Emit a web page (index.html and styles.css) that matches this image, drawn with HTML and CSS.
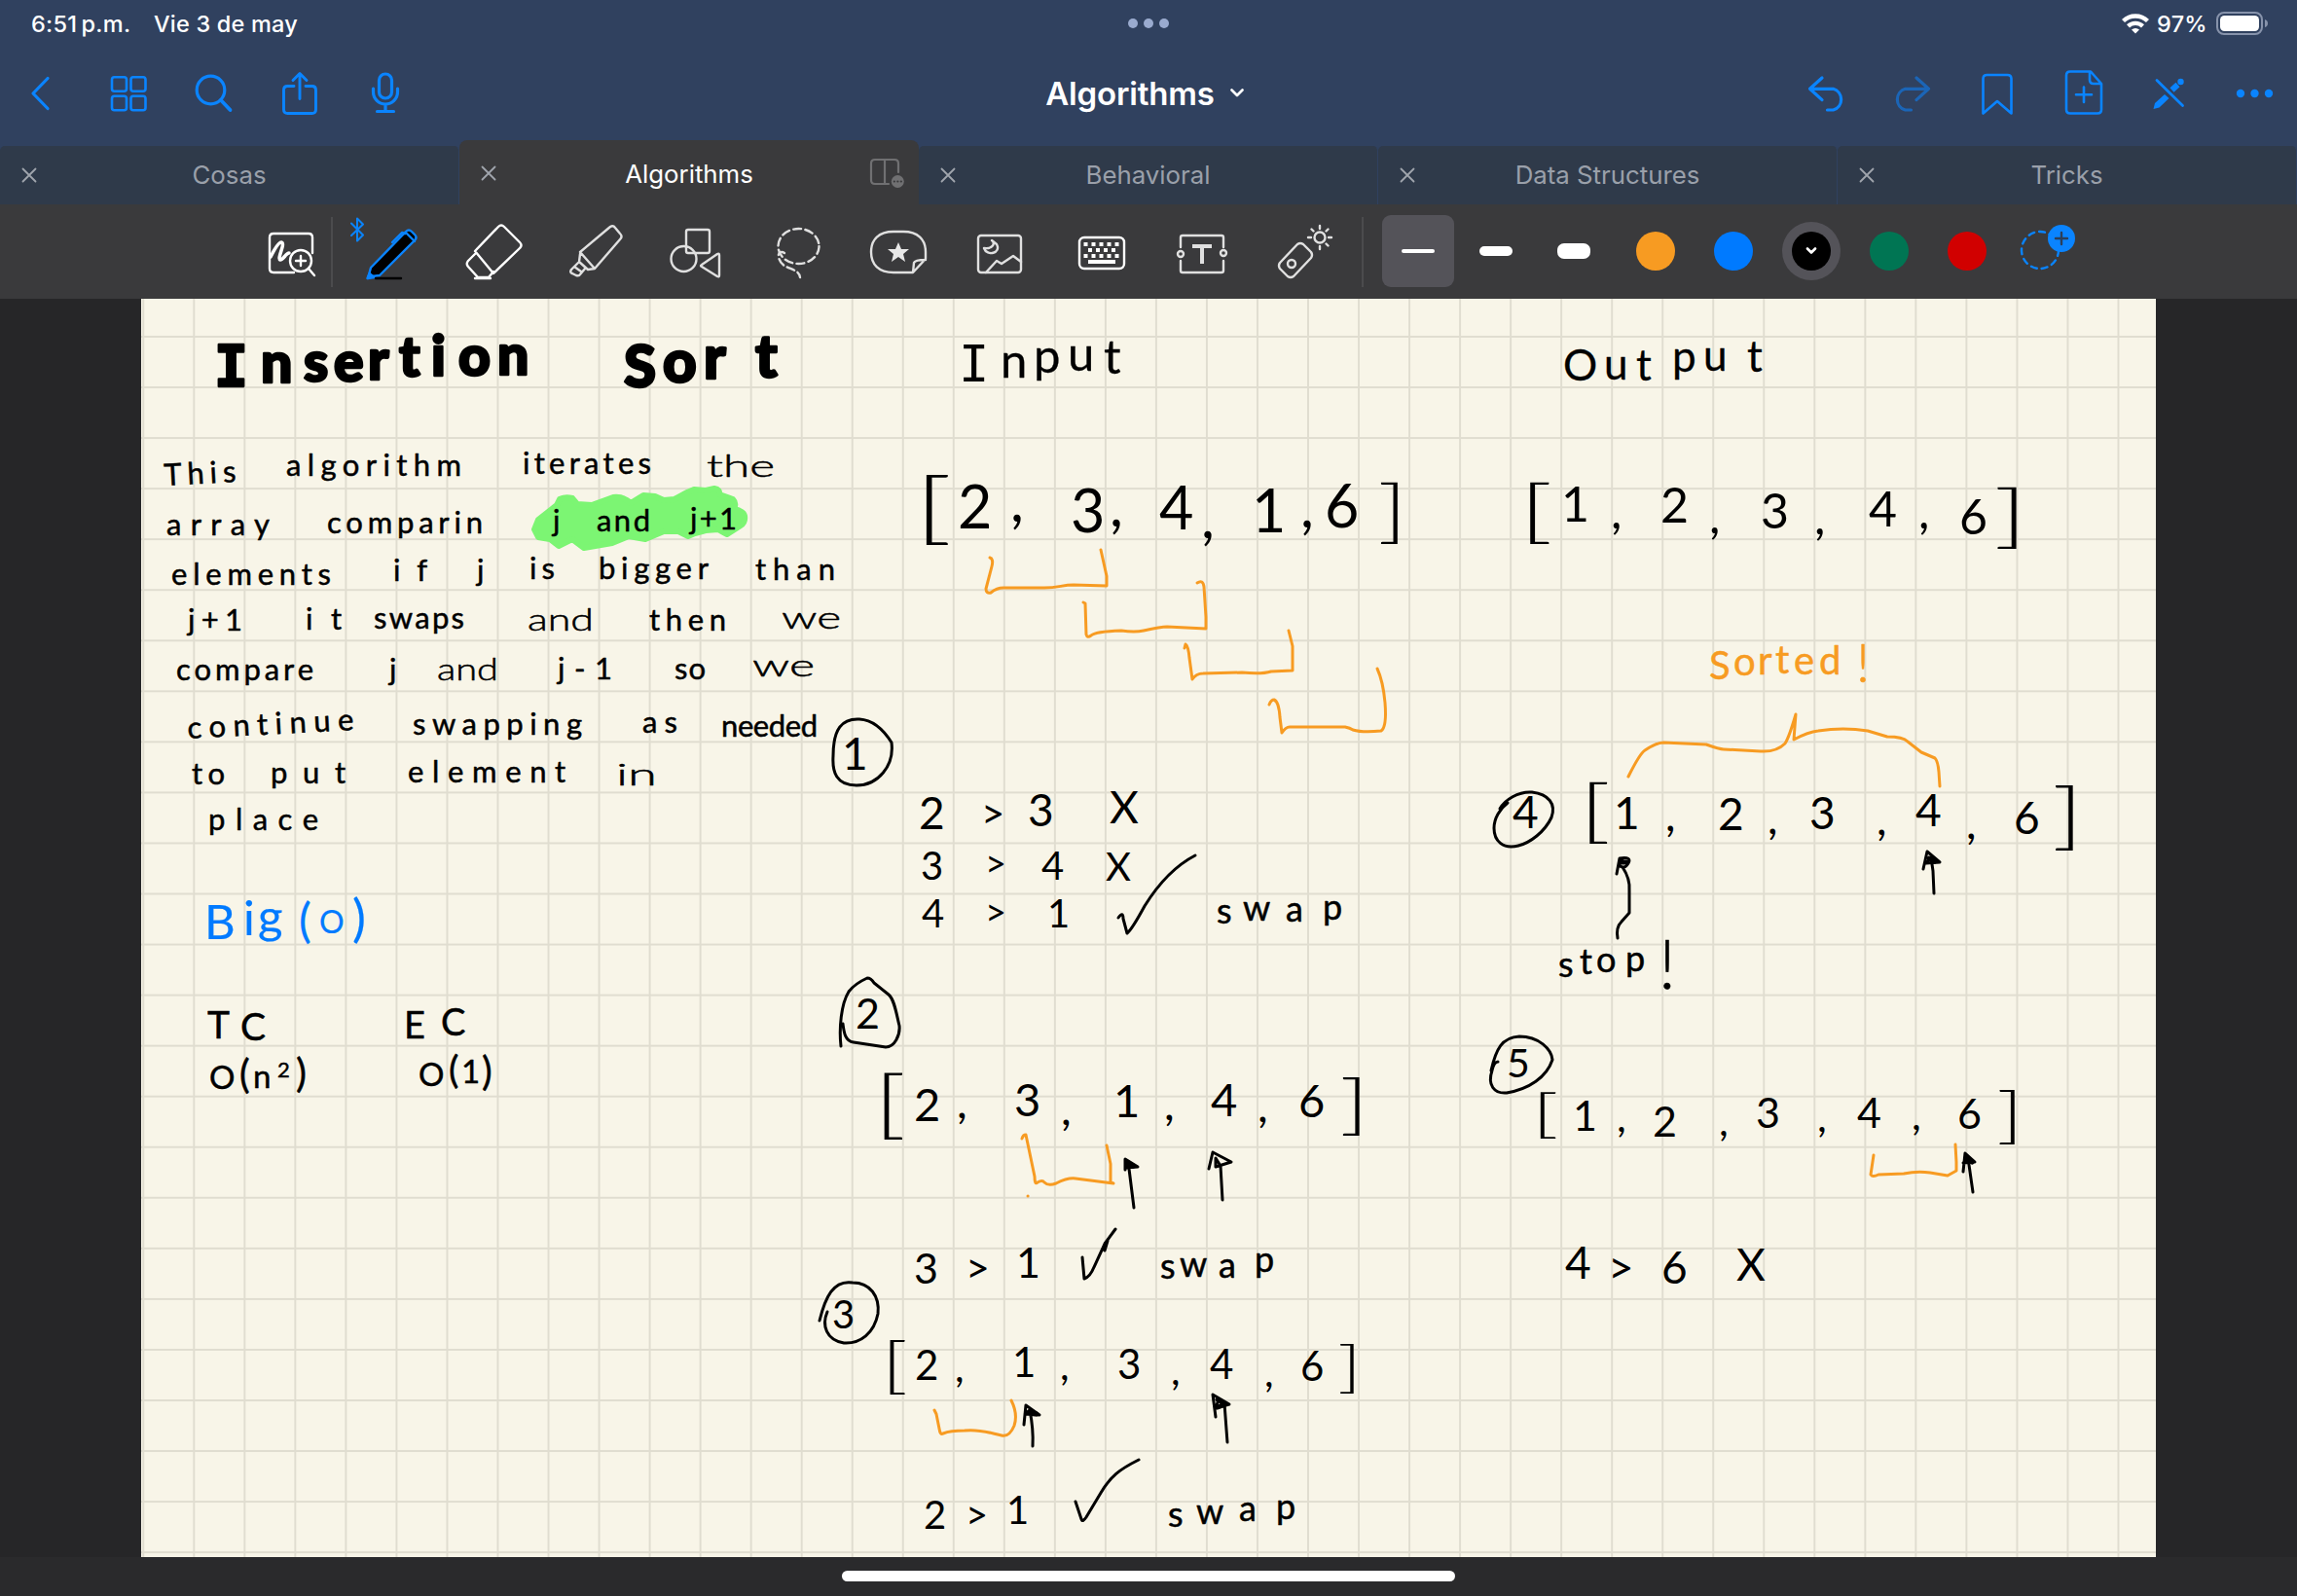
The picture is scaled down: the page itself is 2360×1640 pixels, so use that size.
FILE: index.html
```html
<!DOCTYPE html>
<html lang="es">
<head>
<meta charset="utf-8">
<title>Algorithms</title>
<link rel="stylesheet" href="styles.css">
</head>
<body>
<header class="top">
  <div class="status">
    <span class="time">6:51<span class="thin"> </span>p.m.</span>
    <span class="date">Vie 3 de may</span>
    <span class="multitask"><i></i><i></i><i></i></span>
    <span class="power">
      <svg width="28" height="32" viewBox="2180 8 28 32" fill="none" stroke="#fff" stroke-width="4.4"><path d="M2181.500 21.500a18 18 0 0 1 25 0M2186.500 26.800a11 11 0 0 1 15 0"/><path d="M2190 30.500a6 6 0 0 1 8 0l-4 4z" fill="#fff" stroke="none"/></svg>
      <span class="percent">97%</span>
      <svg width="56" height="32" viewBox="2276 8 56 32"><rect x="2278" y="13" width="46" height="22" rx="7" fill="none" stroke="#8793ab" stroke-width="2"/><rect x="2281" y="16" width="40" height="16" rx="4.500" fill="#fff"/><path d="M2327 20q3 1 3 4t-3 4z" fill="#8793ab"/></svg>
    </span>
  </div>
  <nav class="nav">
    <div class="group">
      <svg class="nav-icon" viewBox="0 52 88 88"><path d="M49 80.500 34 96l15 15.500"/></svg>
      <svg class="nav-icon" viewBox="88 52 88 88"><g stroke-width="2.600"><rect x="115" y="79.300" width="15" height="14.500" rx="2.500"/><rect x="134.500" y="79.300" width="15" height="14.500" rx="2.500"/><rect x="115" y="98.800" width="15" height="14.500" rx="2.500"/><rect x="134.500" y="98.800" width="15" height="14.500" rx="2.500"/></g></svg>
      <svg class="nav-icon" viewBox="176 52 88 88"><circle cx="216.500" cy="92.500" r="14.300"/><path d="M227 103l9.500 10" stroke-width="3.800"/></svg>
      <svg class="nav-icon" viewBox="264 52 88 88"><path d="M302 88.500h-6.500q-4 0-4 4v20q0 4 4 4h25q4 0 4-4v-20q0-4-4-4H314M308 101.500V76M301 82.500l7-7 7 7" stroke-width="2.900"/></svg>
      <svg class="nav-icon" viewBox="352 52 88 88"><rect x="389.500" y="76" width="13" height="25" rx="6.500"/><path d="M383.500 91v3.500a12.500 12.500 0 0 0 25 0V91M396 107v7M387.500 114.500h17"/></svg>
    </div>
    <h1 class="doc-title">Algorithms <svg width="20" height="14" viewBox="1261 90 20 14"><path d="M1265.500 93.500l5.500 5.500 5.500-5.500"/></svg></h1>
    <div class="group">
      <svg class="nav-icon" viewBox="1832 52 88 88"><path d="M1872 80l-12.500 11.300 12.500 11.300M1860.500 91.300h23a11.300 11.300 0 0 1 0 21.700h-6"/></svg>
      <svg class="nav-icon dim" viewBox="1920 52 88 88"><path d="M1969 80l12.500 11.300-12.500 11.300M1980.500 91.300h-23a11.300 11.300 0 0 0 0 21.700h6"/></svg>
      <svg class="nav-icon" viewBox="2008 52 88 88"><path d="M2037.500 116.500V81q0-4 4-4h21q4 0 4 4v35.500L2052 104z" stroke-width="2.600"/></svg>
      <svg class="nav-icon" viewBox="2096 52 88 88"><path d="M2148 73.500h-21q-4 0-4 4v35q0 4 4 4h28q4 0 4-4V86zM2147 74v8q0 4 4 4h8M2141 89.500v15.500M2133 97.300h16" stroke-width="2.600"/></svg>
      <svg class="nav-icon" viewBox="2184 52 88 88"><path d="M2216 82.500l26.500 26" stroke-width="2.800"/><path d="M2224 97l4.500 4-10 9.500-6 1.500 1.500-6z" fill="#0a84ff" stroke="none"/><path d="M2231.500 92.500l6-5.500" stroke-width="6" stroke-linecap="butt"/><circle cx="2240.500" cy="84" r="3.200" fill="#0a84ff" stroke="none"/></svg>
      <svg class="nav-icon" viewBox="2272 52 88 88"><g fill="#0a84ff" stroke="none"><circle cx="2302" cy="96" r="4.200"/><circle cx="2316.500" cy="96" r="4.200"/><circle cx="2331" cy="96" r="4.200"/></g></svg>
    </div>
  </nav>
</header>
<div class="tabs">
  <div class="tab"><svg class="close" viewBox="0 0 16 16"><path d="M1.500 1.500l13 13M14.500 1.500l-13 13"/></svg><span>Cosas</span></div>
  <div class="tab active"><svg class="close" viewBox="0 0 16 16"><path d="M1.500 1.500l13 13M14.500 1.500l-13 13"/></svg><span>Algorithms</span>
    <svg class="split" viewBox="892 160 40 36"><path d="M923 177v-9q0-4-4-4h-20q-4 0-4 4v17q0 4 4 4h14M909 164v25"/><circle cx="922.300" cy="186.500" r="6.500" fill="#707072" stroke="none"/><path d="M918.800 186.500h.1M922.300 186.500h.1M925.800 186.500h.1" stroke="#3a3a3c"/></svg></div>
  <div class="tab"><svg class="close" viewBox="0 0 16 16"><path d="M1.500 1.500l13 13M14.500 1.500l-13 13"/></svg><span>Behavioral</span></div>
  <div class="tab"><svg class="close" viewBox="0 0 16 16"><path d="M1.500 1.500l13 13M14.500 1.500l-13 13"/></svg><span>Data Structures</span></div>
  <div class="tab"><svg class="close" viewBox="0 0 16 16"><path d="M1.500 1.500l13 13M14.500 1.500l-13 13"/></svg><span>Tricks</span></div>
</div>
<div class="toolbar">
  <svg class="tool zoom" viewBox="260 210 80 97"><path d="M302 280h-21q-4 0-4-4v-32q0-4 4-4h36q4 0 4 4v16"/><path d="M278 264c4-8 8-15 11-15 5 1-5 17-1 18 3 0 6-7 9-7" stroke-width="3.500"/><circle cx="309" cy="268" r="11"/><path d="M317 276l6 7M309 263v10M304 268h10"/></svg>
  <span class="rule"></span>
  <svg class="tool" viewBox="351 210 104 97"><path d="M361 229.500l12 12-6 6v-23l6 6-12 11.500" stroke="#0a84ff" stroke-width="2"/><path d="M378 286l3-11 36-37q3-3 6 0l3 3q3 3 0 6l-36 36-8 1z" fill="#000" stroke="#0a84ff" stroke-width="2.400"/><path d="M403 249l10-10 3 1M417 239l9 9" stroke="#0a84ff"/><path d="M377.500 286l2-5 5 4z" fill="#0a84ff" stroke="#0a84ff"/><path d="M386 286h26" stroke="#000"/></svg>
  <svg class="tool" viewBox="455 210 104 97"><path d="M488 258l24-25q3-3 6 0l16 16q3 3 0 6l-27 26zM488 261l-7 7q-2.500 3 0 6l10 11h11l5-6M488 286h16"/></svg>
  <svg class="tool soft" viewBox="559 210 104 97"><path d="M596 259l31-26q3-2 5 1l5 6q3 3 0 6l-26 30zM596 261l-1 8 9 8 7-1M594 270l-7 7q-2 3 1 4l4 2q3 1 4-1l5-6M590 274l7 5"/></svg>
  <svg class="tool soft" viewBox="663 210 104 97"><rect x="705" y="236" width="24" height="24" rx="2"/><circle cx="702.500" cy="266" r="13"/><path d="M739 262v21q0 2-2 1l-16-10q-2-1 0-2l16-11q2-1 2 1z"/></svg>
  <svg class="tool soft" viewBox="767 210 104 97"><path d="M806 260c-3-2-7-1-6 4 2 14 21 10 22 21" stroke-dasharray="8 4"/><ellipse cx="820.500" cy="253" rx="21" ry="18" stroke-dasharray="8 4.300"/></svg>
  <svg class="tool soft" viewBox="871 210 104 97"><path d="M938 280h-20c-15 0-23-8-23-21s8-21 23-21h10c15 0 23 8 23 21v7zM938 280l1-10q1-3 12-3"/><path d="M923 249l3 7h8l-6 5 2 8-7-5-7 5 2-8-6-5h8z" fill="#e8e8e8" stroke="none"/></svg>
  <svg class="tool soft" viewBox="975 210 104 97"><rect x="1005" y="242" width="44" height="38" rx="3"/><path d="M1013 280l11-12 5 3 12-8 8 6M1019 247c4 3 1 9-8 8 3 9 18 5 13-4z"/></svg>
  <svg class="tool" viewBox="1079 210 104 97"><rect x="1109" y="244" width="46" height="32" rx="5"/><path d="M1113.500 251h36M1118 257h30M1113.500 263h36" stroke-width="4" stroke-linecap="butt" stroke-dasharray="4 4"/><path d="M1118 269h28" stroke-width="4" stroke-linecap="butt"/></svg>
  <svg class="tool soft" viewBox="1183 210 104 97"><path d="M1213 254v-10q0-2 2-2h40q2 0 2 2v10M1213 268v10q0 2 2 2h40q2 0 2-2v-10"/><circle cx="1213" cy="261" r="3"/><circle cx="1257" cy="260" r="3"/><path d="M1225 253h20M1235 253v18" stroke-width="4" stroke-linecap="butt"/></svg>
  <svg class="tool soft" viewBox="1287 210 104 97"><path d="M1333 251l-18 19q-2 3 0 6l8 8q3 2 6 0l18-19q2-3 0-6l-8-8q-3-2-6 0z"/><circle cx="1327" cy="271" r="4"/><circle cx="1356" cy="244" r="5.500"/><path d="M1356 232v3M1356 253v3M1344 244h3M1365 244h3M1347.500 235.500l2 2M1362.500 250.500l2 2M1364.500 235.500l-2 2"/></svg>
  <span class="rule second"></span>
  <div class="options">
    <span class="pick selected"><i class="w1"></i></span>
    <span class="pick"><i class="w2"></i></span>
    <span class="pick"><i class="w3"></i></span>
    <span class="swatch"><i class="orange"></i></span>
    <span class="swatch"><i class="blue"></i></span>
    <span class="swatch"><i class="black"><svg width="12" height="10" viewBox="0 0 12 10"><path d="M2 2.500l4 4 4-4"/></svg></i></span>
    <span class="swatch"><i class="green"></i></span>
    <span class="swatch"><i class="red"></i></span>
  </div>
  <svg class="tool add" viewBox="2061 210 84 97"><circle cx="2097" cy="257" r="19" stroke="#0a84ff" stroke-dasharray="6 5"/><circle cx="2119" cy="245" r="14" fill="#0a84ff" stroke="none"/><path d="M2119 239v12M2113 245h12" stroke="#2b3f5a"/></svg>
</div>
<main class="desk">
  <div class="page">
  <svg class="ink" width="2070" height="1293" viewBox="145 307 2070 1293">
    <path class="marker" d="M549 544l4-10 19-15 3-6q6-3 13-1l5 6 15 1 22-8q8-1 14 3l4 3 13-8 12 1 9 4 11-1 13-7 7-3 12 1 9-2q6 1 5 6l14 5q4 4 1 10 10 2 11 7 1 7-4 10l-14 9q-6-3-9-5l-13 1-11 3-7 3-10-5h-15l-19 8-17-3-17 7-29 5-12-9-14 7-9-7-12-2z"/>
    <g class="heading">
      <text x="220 268 312 343 378 410 443 471 511" y="397 393 392 392 390 387 386 386 385" font-size="57"><tspan class="serif" font-size="58">I</tspan>nsertion</text>
      <text x="641 681 723 776" y="398 393 389 388" font-size="60">Sort</text>
    </g>
    <g class="label">
      <text x="985 1028 1062 1097 1134" y="392 388 383 381 384" font-size="49"><tspan class="serif" font-size="52">I</tspan>nput</text>
      <text x="1606 1648 1681 1718 1750 1795" y="391 390 391 382 381 382" font-size="44">Output</text>
    </g>
    <g class="body">
      <text x="169" y="499" textLength="74" transform="rotate(-3 169 499)">This</text><text x="294" y="489" textLength="180">algorithm</text><text x="537" y="487" textLength="132">iterates</text><text class="wide" x="726" y="490" textLength="70" lengthAdjust="spacingAndGlyphs">the</text>
      <text x="171" y="550" textLength="106">array</text><text x="336" y="548" textLength="160">comparin</text><text x="568" y="546">j</text><text x="613" y="546" textLength="55">and</text><text x="709" y="544" textLength="48">j+1</text>
      <text x="176" y="601" textLength="164">elements</text><text x="404" y="597" textLength="35">if</text><text x="490" y="597">j</text><text x="544" y="595" textLength="26">is</text><text x="615" y="595" textLength="113">bigger</text><text x="776" y="596" textLength="82">than</text>
      <text x="193" y="648" textLength="56">j+1</text><text x="314" y="647" textLength="37">it</text><text x="384" y="646" textLength="93">swaps</text><text class="wide" x="542" y="648" textLength="68" lengthAdjust="spacingAndGlyphs">and</text><text x="667" y="648" textLength="79">then</text><text class="wide" x="803" y="646" textLength="61" lengthAdjust="spacingAndGlyphs">we</text>
      <text x="181" y="699" textLength="141">compare</text><text x="400" y="699">j</text><text class="wide" x="449" y="699" textLength="63" lengthAdjust="spacingAndGlyphs">and</text><text x="573" y="698" textLength="56">j-1</text><text x="693" y="698" textLength="32">so</text><text class="wide" x="773" y="695" textLength="64" lengthAdjust="spacingAndGlyphs">we</text>
      <text x="193" y="759" textLength="171" transform="rotate(-3 193 759)">continue</text><text x="424" y="755" textLength="174">swapping</text><text x="660" y="753" textLength="36">as</text><text x="741" y="757" textLength="99">needed</text>
      <text x="197" y="806" textLength="34">to</text><text x="278" y="805" textLength="77">put</text><text x="419" y="804" textLength="162">element</text><text class="wide" x="633" y="807" textLength="42" lengthAdjust="spacingAndGlyphs">in</text>
      <text x="214" y="853" textLength="113">place</text>
    </g>
    <text class="sky" x="210 250 265 307 328 362" y="965 961 959 963 959 962" font-size="49">Big<tspan font-size="48">(</tspan><tspan font-size="32">O</tspan><tspan font-size="52">)</tspan></text>
    <g font-size="39">
      <text x="213 247" y="1067 1069">TC</text>
      <text x="415 453" y="1067 1064" font-size="38">EC</text>
      <text x="215 246 260 285 304" y="1119 1118 1118 1107 1117" font-size="33">O<tspan font-size="40">(</tspan>n<tspan font-size="22">2</tspan><tspan font-size="41">)</tspan></text>
      <text x="430 461 474 495" y="1116 1113 1113 1115" font-size="33">O<tspan font-size="39">(</tspan>1<tspan font-size="40">)</tspan></text>
    </g>
    <g class="arrays">
      <text x="984 1038 1100 1140 1191 1234 1286 1336 1361" y="543 536 547 541 544 553 547 542 542" font-size="61">2,3,4,1,6</text>
      <text x="1604 1655 1706 1756 1809 1864 1920 1971 2013" y="536 543 537 548 543 549 541 543 549" font-size="50">1,2,3,4,6</text>
      <text x="939 983 1042 1090 1144 1196 1244 1292 1334" y="1152 1149 1147 1156 1148 1151 1147 1153 1148" font-size="47">2,3,1,4,6</text>
      <text x="940 981 1040 1089 1148 1203 1243 1299 1336" y="1418 1420 1415 1418 1417 1423 1417 1425 1419" font-size="42">2,1,3,4,6</text>
      <text x="1658 1711 1765 1816 1859 1928 1968 2020 2069" y="852 854 853 857 852 858 849 862 857" font-size="46">1,2,3,4,6</text>
      <text x="1616 1661 1698 1766 1804 1867 1908 1964 2011" y="1162 1163 1168 1167 1159 1163 1159 1161 1160" font-size="43">1,2,3,4,6</text>
    </g>
    <g class="brackets">
      <text transform="translate(938 549) scale(1.700 1)" font-size="81">[</text><text transform="translate(1415 550) scale(1.500 1)" font-size="71">]</text>
      <text transform="translate(1560 550) scale(1.700 1)" font-size="71">[</text><text transform="translate(2048 555) scale(1.700 1)" font-size="71">]</text>
      <text transform="translate(897 1161) scale(1.500 1)" font-size="77">[</text><text transform="translate(1376 1158) scale(1.600 1)" font-size="66">]</text>
      <text transform="translate(905 1425) scale(1.500 1)" font-size="63">[</text><text transform="translate(1374 1424) scale(1.500 1)" font-size="57">]</text>
      <text transform="translate(1622 858) scale(1.600 1)" font-size="70">[</text><text transform="translate(2108 864) scale(1.500 1)" font-size="74">]</text>
      <text transform="translate(1573 1163) scale(1.800 1)" font-size="54">[</text><text transform="translate(2051 1168) scale(1.500 1)" font-size="64">]</text>
    </g>
    <g class="steps" font-size="46">
      <text x="865" y="791">1</text>
      <text x="944 1008 1056 1140" y="852 851 849 846">2<tspan font-size="42">&gt;</tspan>3X</text>
      <text x="946 1012 1070 1136" y="904 901 904 905" font-size="40">3<tspan font-size="38">&gt;</tspan>4X</text>
      <text x="947 1012 1076" y="953 951 953" font-size="40">4<tspan font-size="38">&gt;</tspan>1</text>
      <text x="879" y="1057" font-size="43">2</text>
      <text x="939 992 1044" y="1319 1318 1313" font-size="43">3&gt;1</text>
      <text x="855" y="1365" font-size="40">3</text>
      <text x="949 992 1034" y="1571 1571 1566" font-size="40">2&gt;1</text>
      <text x="1554" y="851">4</text>
      <text x="1548" y="1107" font-size="41">5</text>
      <text x="1608 1652 1707 1784" y="1314 1319 1319 1316">4&gt;6X</text>
    </g>
    <g class="word">
      <text x="1250 1277 1321 1359" y="949 946 947 945">swap</text>
      <text x="1192 1212 1252 1289" y="1314 1312 1313 1307">swap</text>
      <text x="1200 1229 1273 1311" y="1569 1566 1563 1561">swap</text>
      <text x="1601 1623 1640 1670 1704" y="1004 1001 999 998 1016">stop<tspan class="thin-mark" font-size="70">!</tspan></text>
      <text class="amber" x="1756 1781 1806 1824 1843 1869 1907" y="698 694 693 692 693 693 701" font-size="40">Sorted<tspan class="thin-mark" font-size="55">!</tspan></text>
    </g>
    <g class="line amber-line">
      <path d="M1017 573q4 1 2 9l-6 23q0 5 5 4 6-5 13-5h42c15 0 18-3 30-3l34 1v-10l-6-27"/>
      <path d="M1113 619l2 1 1 32q1 4 5 1 4-4 31-5 14 2 23 0 18-4 24-4l40 2v-12l-2-31q-1-8-7-4"/>
      <path d="M1217 666l1-4q3 2 4 14l3 22q4-6 11-6l40-1q20 2 30-1l22-1v-25l-4-16"/>
      <path d="M1304 724q2-5 5-5 5 2 6 18l2 16q4-6 8-6h57q5 1 8 3 10 3 29 1 6-4 4-29-2-22-8-35"/>
      <path d="M1050 1170q1-4 4-4l9 43q0 9 3 6 5-3 7 0 4 4 12 1 12-6 20-5l39 5-3-1v-19l-4-19"/>
      <path d="M960 1449l2 4 3 15q1 7 4 5 7-3 22-3c16-2 28 3 38 5q8 2 13-10 4-12-3-26"/>
      <path d="M1673 798q12-24 17-27 12-8 19-8l44 2q14 5 18 5l38 2q16 1 25-8 4-6 11-30l-2 26q15-8 25-9 26-4 51 0l20 6q16 0 21 5l14 11 14 6q3 3 4 14l1 15"/>
      <path d="M1925 1187l-3 20q2 3 8 0l26-1q14-3 27-1l18 3 9-5v-9l-1-18"/>
      <path d="M1056 1229h.1"/>
    </g>
    <g class="line">
      <path d="M856 777c0-28 9-39 27-38 17 1 28 16 33 24 3 24-14 44-36 44-21 0-25-14-24-30z"/>
      <path d="M864 1075c-2-18 0-43 8-56q6-8 19-14 4 0 7 5l15 12c6 5 8 20 11 32 1 10-5 22-14 22l-33-5c-9-1-10-11-11-19"/>
      <path d="M842 1357c6-24 14-42 34-39 18 0 28 14 26 32-4 20-18 31-35 30-18-3-23-18-17-32"/>
      <path d="M1541 831c5-9 19-18 33-17 17 2 25 12 20 26-7 15-22 26-34 29-16 4-25-5-25-18 0-10 6-20 14-26"/>
      <path d="M1539 1091q-4 0-6 9c-5 15 2 24 15 23 23-4 41-16 47-34-1-11-14-24-34-24-18 1-24 13-29 35"/>
      <path d="M1149 943q5-7 5 1l4 15q5-4 18-28 23-37 52-52"/>
      <path d="M1112 1292l2 22q6-2 10-12l11-24 11-15M1138 1275l-3 10"/>
      <path d="M1105 1543l6 18q1 4 5-2l15-25c10-17 19-24 39-34"/>
      <path d="M1661 898l3-16q13-2 9 5-4 7-10 2l4-5M1667 891q8 12 7 24v23l-8 9q-6 6-4 17"/>
      <path d="M1976 893l4-18 13 11-14 1 5-6 2 14 1 23"/>
      <path d="M2017 1204l2-19 10 9-12 1 5-5 5 35"/>
      <path d="M1156 1202v-11l13 8-12 1 2-7 6 48"/>
      <path d="M1242 1201l4-17 19 10-16 5v-9l5 8 2 35"/>
      <path d="M1052 1464l2-20 14 10-15-1 5-4q4 20 3 37"/>
      <path d="M1249 1456l-3-23 17 10-14 4 3-9 6 4 3 40"/>
    </g>
    <g class="line fat"><path d="M1058 1452l7 1M1982 882l6 3M2020 1190l6 4M1251 1438l8 5-8 3M1158 1194l6 4M1665 886l6 0"/></g>
  </svg>
  </div>
</main>
<div class="home"></div>
</body>
</html>
```
FILE: styles.css
```css
* { box-sizing: border-box; }
body {
  margin: 0;
  width: 2360px;
  height: 1640px;
  overflow: hidden;
  background: #2a2a2c;
  font-family: Inter, "Liberation Sans", sans-serif;
  color: #fff;
  display: flex;
  flex-direction: column;
}
svg { display: block; flex: none; }
i { display: block; }

.top { height: 144px; background: #30415f; }
.status {
  height: 48px;
  display: grid;
  grid-template-columns: 126px 1004px 100px 1fr;
  align-items: center;
  padding-left: 32px;
  font-size: 23.5px;
  font-weight: 500;
}
.time { letter-spacing: .3px; }
.date { letter-spacing: .2px; }
.thin { font-size: 14px; }
.multitask { display: flex; gap: 6px; margin-left: -3px; }
.multitask i { width: 10px; height: 10px; border-radius: 50%; background: #9aabcf; }
.power { display: flex; justify-content: flex-end; align-items: center; gap: 8px; padding-right: 28px; }
.percent { letter-spacing: .3px; }

.nav {
  height: 96px;
  display: flex;
  align-items: center;
  justify-content: space-between;
}
.group { display: flex; }
.nav-icon {
  width: 88px;
  height: 88px;
  fill: none;
  stroke: #0a84ff;
  stroke-width: 3.2;
  stroke-linecap: round;
  stroke-linejoin: round;
}
.dim { opacity: .55; }
.doc-title {
  margin: 0 0 0 83px;
  display: flex;
  align-items: center;
  gap: 13px;
  font-size: 33px;
  font-weight: 600;
  letter-spacing: -.15px;
}
.doc-title svg, .black svg { fill: none; stroke: #fff; stroke-width: 2.6; stroke-linecap: round; stroke-linejoin: round; }

.tabs {
  height: 66px;
  display: flex;
  align-items: flex-end;
  background: #30415f;
}
.tab {
  width: 472px;
  height: 60px;
  display: grid;
  grid-template-columns: 52px 1fr 52px;
  align-items: center;
  padding-bottom: 1px;
  background: #2f3a4a;
  border-right: 1px solid #30415f;
  border-radius: 5px 5px 0 0;
  color: #9aa0aa;
  font-size: 25.8px;
  text-align: center;
}
.tab.active { height: 66px; padding: 2px 0 0; background: #3a3a3c; color: #fff; border-radius: 8px 8px 0 0; border-right: 0; }
.close { width: 16px; height: 16px; margin-left: 22px; fill: none; stroke: #a0a5ad; stroke-width: 1.8; stroke-linecap: round; }
.split { width: 40px; height: 36px; fill: none; stroke: #707072; stroke-width: 2.2; stroke-linecap: round; }

.toolbar { height: 97px; flex: none; display: flex; align-items: center; background: #3a3a3c; }
.tool {
  width: 104px;
  height: 97px;
  fill: none;
  stroke: #fff;
  stroke-width: 2.4;
  stroke-linecap: round;
  stroke-linejoin: round;
}
.soft { stroke: #e0e0e0; }
.zoom { width: 80px; margin-left: 260px; }
.add { width: 84px; }
.rule { width: 2px; height: 72px; margin-right: 9px; background: #4b4b4d; }
.second { margin: 0 19px 0 8px; }
.options { display: flex; align-items: center; padding-bottom: 1px; }
.pick { width: 74px; height: 74px; margin-right: 6px; border-radius: 9px; display: flex; align-items: center; justify-content: center; }
.selected { background: #545359; }
.pick i { width: 34px; background: #fff; }
.w1 { height: 4px; border-radius: 2px; }
.w2 { height: 10px; border-radius: 5px; }
.w3 { height: 16px; border-radius: 7px; }
.swatch { width: 80px; padding-left: 2px; display: flex; justify-content: center; }
.swatch i { width: 40px; height: 40px; border-radius: 50%; }
.orange { background: #f79b22; }
.blue { background: #007aff; }
.black { background: #000; box-shadow: 0 0 0 10px #545359; display: flex; align-items: center; justify-content: center; }
.green { background: #007553; }
.red { background: #d10000; }

.desk { height: 1293px; flex: none; padding-left: 145px; background: #262628; }
.page {
  width: 2070px;
  height: 1293px;
  background-color: #f8f5e8;
  background-image:
    linear-gradient(to right, #e0ddd0 2px, transparent 2px),
    linear-gradient(to bottom, #e0ddd0 2px, transparent 2px);
  background-size: 52.04px 52.06px;
  background-position: 1.3px 38px;
}
.ink text { font-family: Lato, "Open Sans", sans-serif; font-variant-ligatures: none; fill: #000; stroke: #000; stroke-width: .5; stroke-linejoin: round; }
.ink .serif { font-family: "DejaVu Sans Mono", monospace; }
.ink .heading text { font-weight: 900; stroke-width: 2.6; }
.ink .heading .serif { font-weight: 700; }
.ink .label text { stroke-width: .3; }
.ink .label .serif { stroke-width: 0; }
.body { font-size: 31px; }
.ink .wide { font-weight: 300; }
.word { font-size: 36px; }
.ink .arrays text, .ink .steps text { stroke-width: 0; }
.ink .brackets text { font-weight: 300; stroke-width: 0; }
.ink .sky { fill: #007aff; stroke: #007aff; stroke-width: .2; }
.ink .amber { fill: #f79b22; stroke: #f79b22; }
.ink .thin-mark { font-weight: 300; }
.line { fill: none; stroke: #000; stroke-width: 3; stroke-linecap: round; stroke-linejoin: round; }
.amber-line { stroke: #f79b22; }
.fat { stroke-width: 5; }
.marker { fill: #7cf573; stroke: #7cf573; stroke-width: 6; stroke-linejoin: round; }

.home { width: 630px; height: 11px; margin: 14px 0 0 865px; border-radius: 6px; background: #fff; }
```
